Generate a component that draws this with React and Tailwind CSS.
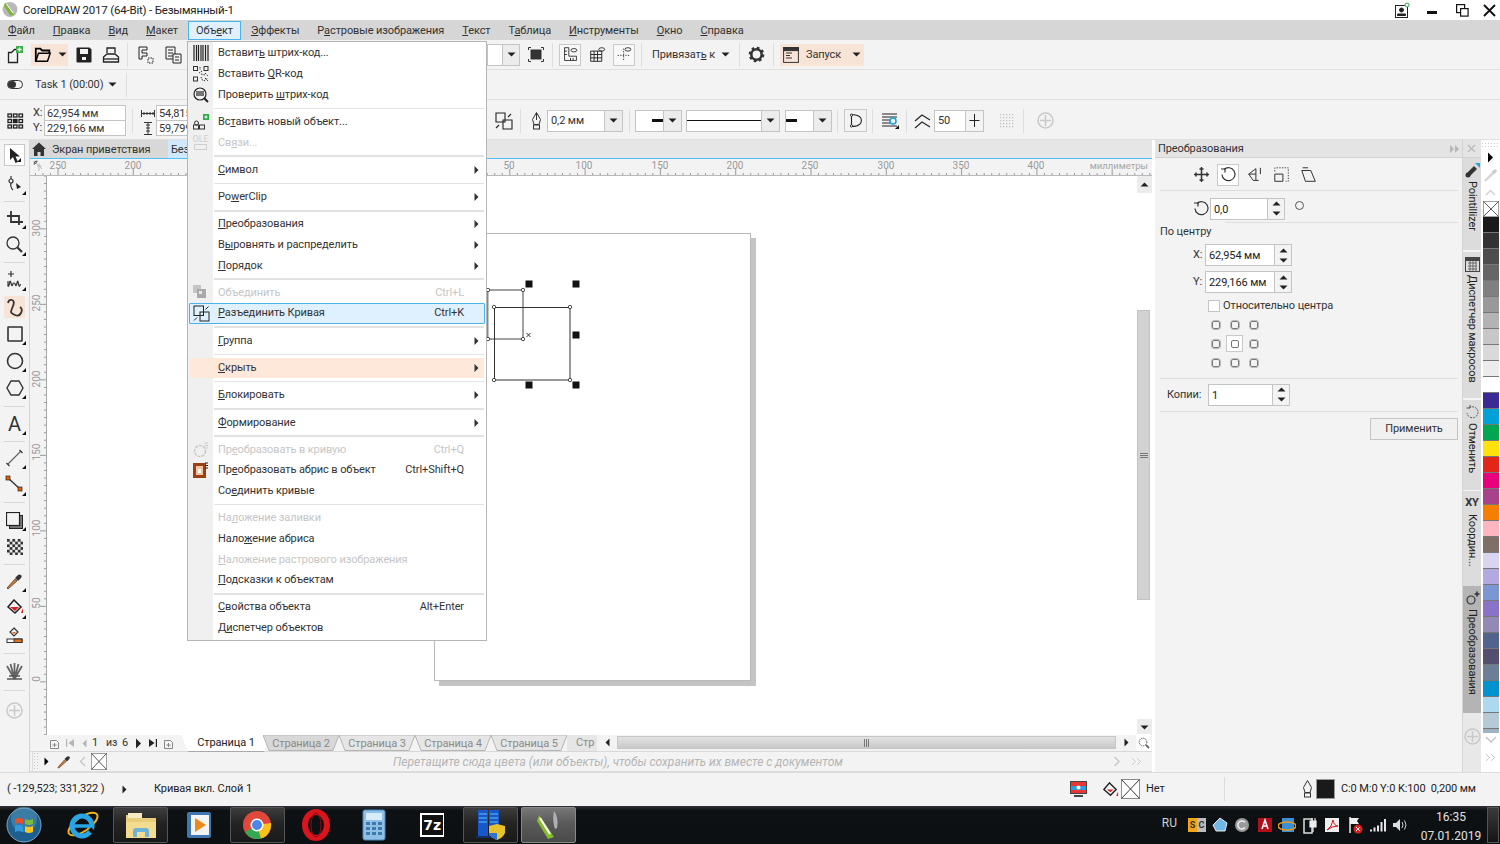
import React from "react";

// small svg wrapper, all toolbar glyphs are drawn on a 20x20 grid
const Ic = ({ s = 20, v = 20, c = "", children }) => (
  <svg width={s} height={s} viewBox={`0 0 ${v} ${v}`} fill="none" stroke="currentColor" strokeWidth="1.3" className={c}>
    {children}
  </svg>
);

const Caret = ({ dir = "down", c = "text-[#222]" }) => (
  <svg width="9" height="9" viewBox="0 0 9 9" className={c} fill="currentColor">
    {dir === "down" && <polygon points="0.5,2.5 8.5,2.5 4.5,6.5" />}
    {dir === "up" && <polygon points="0.5,6.5 8.5,6.5 4.5,2.5" />}
    {dir === "right" && <polygon points="2.5,0.5 6.5,4.5 2.5,8.5" />}
    {dir === "left" && <polygon points="6.5,0.5 2.5,4.5 6.5,8.5" />}
  </svg>
);

const Mn = ({ t }) => {
  const [a, b] = t.split("&");
  if (b === undefined) return t;
  return (
    <>
      {a}
      <span className="underline">{b[0]}</span>
      {b.slice(1)}
    </>
  );
};

const VSep = ({ c = "" }) => <div className={`w-px h-[24px] bg-[#dedede] shrink-0 ${c}`} />;

const Cell = ({ c = "", size = "h-[22px] w-[20px]", children }) => (
  <div className={`shrink-0 flex items-center justify-center text-[#222] ${size} ${c}`}>{children}</div>
);

const XBox = ({ c = "" }) => (
  <svg viewBox="0 0 16 16" preserveAspectRatio="none" className={c} stroke="#333" strokeWidth="0.8">
    <rect x="0.4" y="0.4" width="15.2" height="15.2" fill="#fff" stroke="#8a8a8a" />
    <path d="M0.5 0.5 15.5 15.5M15.5 0.5 0.5 15.5" />
  </svg>
);

const menuItems = ["&Файл", "&Правка", "&Вид", "&Макет", "Объ&ект", "&Эффекты", "Р&астровые изображения", "&Текст", "Т&аблица", "&Инструменты", "&Окно", "&Справка"];

function TitleBar() {
  return (
    <div className="h-[20px] bg-white flex items-center">
      <svg width="18" height="18" viewBox="0 0 18 18" className="ml-[1px]">
        <circle cx="9" cy="8.5" r="7.5" fill="#b9b9b9" />
        <path d="M4 1.5 13 13.5 9.5 15 3 5Z" fill="#7cb733" />
        <path d="M5.5 3 12 12" stroke="#fff" strokeWidth="1" />
      </svg>
      <span className="ml-[4px] text-[11.5px] tracking-[-0.2px] text-[#222]">CorelDRAW 2017 (64-Bit) - Безымянный-1</span>
      <div className="ml-auto flex items-center text-[#222]">
        <svg width="16" height="16" viewBox="0 0 16 16" fill="none" stroke="#222" className="mr-[17px]">
          <rect x="1.5" y="3.5" width="12" height="12" />
          <circle cx="7.5" cy="8" r="2" fill="#222" />
          <path d="M3.5 13.5h8v-1.5h-8Z" fill="#222" />
          <circle cx="13" cy="3" r="2" stroke="#35a853" fill="#fff" />
        </svg>
        <div className="w-[10px] h-[2.5px] bg-[#111] mt-[5px] mr-[19px]" />
        <svg width="13" height="13" viewBox="0 0 13 13" fill="none" stroke="#111" strokeWidth="1.2" className="mr-[14px]">
          <rect x="0.6" y="0.6" width="8" height="8" />
          <rect x="4.6" y="4.6" width="7.5" height="7.5" fill="#fff" />
        </svg>
        <svg width="13" height="13" viewBox="0 0 13 13" stroke="#111" strokeWidth="1.9" className="mr-[4px]">
          <path d="M1 1 12 12M12 1 1 12" />
        </svg>
      </div>
    </div>
  );
}

function MenuBar() {
  return (
    <div className="h-[20px] bg-[#d6d6d6] flex items-center pl-[8px] gap-[18px] text-[#333]">
      {menuItems.map((m) =>
        m === "Объ&ект" ? (
          <div key={m} className="h-[19px] mt-[1px] px-[7px] -mx-[8px] flex items-center bg-[#e0f0fe] border border-[#4ab5ea]">
            <Mn t={m} />
          </div>
        ) : (
          <span key={m} className="mt-[1px]">
            <Mn t={m} />
          </span>
        )
      )}
    </div>
  );
}

function Toolbar1() {
  return (
    <div className="h-[30px] bg-[#f3f3f3] border-b border-[#e0e0e0] flex items-center">
      <Cell c="ml-[5px]">
        <Ic>
          <path d="M3.5 7.5h3l3-3h3v13h-9Z" />
          <rect x="11" y="1" width="7" height="7" fill="#3dae49" stroke="none" />
          <path d="M14.5 2.5v4M12.5 4.5h4" stroke="#fff" />
        </Ic>
      </Cell>
      <div className="ml-[6px] w-[37px] h-[22px] bg-[#f8e3d7] flex items-center pl-[3px] gap-[6px]">
        <Ic s={18}>
          <path d="M2 17V3h5l2 2h8v3" strokeWidth="2" />
          <path d="M2 17l3-9h13l-3 9Z" strokeWidth="1.6" />
        </Ic>
        <Caret />
      </div>
      <Cell c="ml-[6px]">
        <svg width="16" height="16" viewBox="0 0 16 16">
          <path d="M0.5 1.5q0-1 1-1h12l2 2v12q0 1-1 1h-13q-1 0-1-1Z" fill="#222" />
          <rect x="4" y="2" width="8" height="5" fill="#f3f3f3" />
          <rect x="6" y="10" width="4" height="3" fill="#f3f3f3" />
        </svg>
      </Cell>
      <Cell c="ml-[7px]">
        <Ic>
          <path d="M6 8V3h8v5M2.5 17v-5l3.5-3h8l3.5 3v5Z" />
          <path d="M2.5 14h15" />
        </Ic>
      </Cell>
      <VSep c="ml-[6px]" />
      <Cell c="ml-[8px]">
        <Ic>
          <path d="M3 2h8v3H6v3h5v3H6v3H3Z" strokeWidth="1" />
          <path d="M12 13h5v5h-5Z" strokeDasharray="1.5 1" strokeWidth="1" />
        </Ic>
      </Cell>
      <Cell c="ml-[7px]">
        <Ic>
          <path d="M3 2h9v12H3Z" strokeWidth="1" />
          <path d="M5 5h5M5 8h5M5 11h5" strokeWidth="1" />
          <path d="M10 9h8v9h-8Z" fill="#f3f3f3" strokeWidth="1" />
          <path d="M12 12h4M12 15h4" strokeWidth="1" />
        </Ic>
      </Cell>
      <div className="ml-[304px] h-[22px] w-[33px] border border-[#c4c4c4] bg-white flex justify-end">
        <div className="w-[17px] bg-[#ececec] border-l border-[#c4c4c4] flex items-center justify-center">
          <Caret />
        </div>
      </div>
      <Cell c="ml-[6px]">
        <svg width="16" height="15" viewBox="0 0 16 15" fill="none" stroke="#333">
          <rect x="3" y="3" width="10" height="9" fill="#333" />
          <path d="M0.5 3V0.5H3M13 0.5h2.5V3M15.5 12v2.5H13M3 14.5H0.5V12" />
        </svg>
      </Cell>
      <VSep c="ml-[6px]" />
      <Cell size="h-[22px] w-[22px]" c="ml-[6px] border border-[#c9c9c9] bg-[#f8f8f8]">
        <Ic s={17}>
          <path d="M3 2v15h14v-5H8V2Z" strokeWidth="1" />
          <path d="M10 14v3M13 14v3M3 6h3M3 10h3" strokeWidth="1" />
          <ellipse cx="14" cy="5" rx="3.5" ry="2" strokeWidth="1" />
        </Ic>
      </Cell>
      <Cell size="h-[22px] w-[22px]" c="ml-[5px]">
        <Ic s={17}>
          <path d="M2 6h13v12H2ZM2 10h13M2 14h13M6 6v12M10 6v12" strokeWidth="1.1" />
          <ellipse cx="15" cy="4" rx="3.5" ry="2" strokeWidth="1" />
        </Ic>
      </Cell>
      <Cell size="h-[22px] w-[22px]" c="ml-[5px] border border-[#c9c9c9] bg-[#f8f8f8]">
        <Ic s={17}>
          <path d="M9 3v14M2 11h14" strokeWidth="1" strokeDasharray="1.5 1.5" />
          <ellipse cx="14" cy="4" rx="3.5" ry="2" strokeWidth="1" />
        </Ic>
      </Cell>
      <VSep c="ml-[6px]" />
      <span className="ml-[10px] mt-[1px] w-[51px] whitespace-nowrap text-[#333]">
        <Mn t="Привязат&ь к" />
      </span>
      <div className="ml-[18px]">
        <Caret />
      </div>
      <VSep c="ml-[9px]" />
      <Cell c="ml-[6px]">
        <svg width="17" height="17" viewBox="0 0 17 17" fill="none">
          <circle cx="8.5" cy="8.5" r="5.2" stroke="#333" strokeWidth="2.6" />
          <circle cx="8.5" cy="8.5" r="6.6" stroke="#333" strokeWidth="2.5" strokeDasharray="2.6 2.6" />
        </svg>
      </Cell>
      <VSep c="ml-[7px]" />
      <div className="ml-[6px] w-[84px] h-[22px] bg-[#f8e3d7] flex items-center pl-[3px] text-[#333]">
        <svg width="16" height="16" viewBox="0 0 16 16" fill="none" stroke="#333">
          <rect x="0.6" y="0.6" width="14.8" height="14.8" />
          <rect x="0.6" y="0.6" width="14.8" height="3" fill="#333" />
          <path d="M3 6h6M3 8.5h4M3 11h6" />
        </svg>
        <span className="ml-[7px] mt-[1px] w-[36px]">Запуск</span>
        <div className="ml-[10px]">
          <Caret />
        </div>
      </div>
    </div>
  );
}

function Toolbar2() {
  return (
    <div className="h-[30px] bg-[#f3f3f3] border-b border-[#e0e0e0] flex items-center">
      <div className="ml-[7px] w-[16px] h-[9px] rounded-full border-[1.5px] border-[#333] flex">
        <div className="w-[8px] h-full rounded-full bg-[#333]" />
      </div>
      <span className="ml-[12px] mt-[1px] w-[65px] whitespace-nowrap text-[#333]">Task 1 (00:00)</span>
      <div className="ml-[8px]">
        <Caret />
      </div>
      <VSep c="ml-[9px]" />
    </div>
  );
}

const Combo = ({ c = "", btn = true, children }) => (
  <div className={`h-[22px] border border-[#c4c4c4] bg-white flex items-center shrink-0 ${c}`}>
    <div className="flex-1 min-w-0 flex items-center h-full">{children}</div>
    {btn && (
      <div className="w-[18px] h-full bg-[#ececec] border-l border-[#c4c4c4] flex items-center justify-center">
        <Caret />
      </div>
    )}
  </div>
);

function PropBar() {
  return (
    <div className="h-[40px] bg-[#f3f3f3] border-b border-[#e0e0e0] flex items-center pt-[2px]">
      <Cell c="ml-[5px]">
        <svg width="17" height="16" viewBox="0 0 17 16" fill="none" stroke="#222">
          {[1, 6.5, 12].map((y) =>
            [1, 6.5, 12].map((x) => <rect key={`${x}${y}`} x={x} y={y} width="3.5" height="3" fill={x === 6.5 && y === 6.5 ? "#222" : "#f3f3f3"} strokeWidth="1.3" />)
          )}
        </svg>
      </Cell>
      <div className="ml-[8px] flex flex-col text-[#333]">
        <div className="flex items-center h-[15px]">
          <span className="w-[11px]">X:</span>
          <div className="w-[82px] h-[16px] border border-[#c4c4c4] bg-white pl-[2px] leading-[15px]">62,954 мм</div>
        </div>
        <div className="flex items-center h-[15px]">
          <span className="w-[11px]">Y:</span>
          <div className="w-[82px] h-[16px] border border-[#c4c4c4] bg-white pl-[2px] leading-[15px]">229,166 мм</div>
        </div>
      </div>
      <VSep c="ml-[6px]" />
      <div className="ml-[8px] flex flex-col text-[#333]">
        <div className="flex items-center h-[15px]">
          <svg width="14" height="9" viewBox="0 0 14 9" stroke="#333" className="mr-[1px]">
            <path d="M0.5 1v7M13.5 1v7M0.5 4.5h13M3 3v3M6 3v3M9 3v3M12 3v3" />
          </svg>
          <div className="w-[40px] h-[16px] border border-[#c4c4c4] bg-white pl-[2px] leading-[15px]">54,815</div>
        </div>
        <div className="flex items-center h-[15px]">
          <svg width="14" height="13" viewBox="0 0 14 13" stroke="#333" className="mr-[1px]">
            <path d="M3 0.5h8M3 12.5h8M7 0.5v12M5 3h4M5 6h4M5 9h4" />
          </svg>
          <div className="w-[40px] h-[16px] border border-[#c4c4c4] bg-white pl-[2px] leading-[15px]">59,799</div>
        </div>
      </div>
      <Cell c="ml-[298px]">
        <Ic>
          <path d="M2 2h9v9H2ZM9 9h9v9H9Z" fill="none" strokeWidth="1.1" />
          <path d="M14 6l3-3M2 17l3-3" strokeWidth="1.1" />
        </Ic>
      </Cell>
      <VSep c="ml-[6px]" />
      <Cell c="ml-[5px]">
        <svg width="11" height="18" viewBox="0 0 11 18" fill="none" stroke="#333">
          <path d="M5.5 0.5 9.5 7.5 8 12.5H3L1.5 7.5Z" />
          <path d="M5.5 1v7" />
          <rect x="2.5" y="13" width="6" height="4" />
        </svg>
      </Cell>
      <Combo c="ml-[1px] w-[76px]">
        <span className="pl-[3px] text-[#333]">0,2 мм</span>
      </Combo>
      <VSep c="ml-[6px]" />
      <Combo c="ml-[5px] w-[47px]">
        <div className="ml-auto w-[11px] h-[2.5px] bg-[#111]" />
      </Combo>
      <Combo c="ml-[4px] w-[94px]">
        <div className="w-full h-[1px] bg-[#111]" />
      </Combo>
      <Combo c="ml-[5px] w-[47px]">
        <div className="w-[11px] h-[2.5px] bg-[#111]" />
      </Combo>
      <VSep c="ml-[5px]" />
      <Cell size="h-[23px] w-[23px]" c="ml-[6px] border border-[#c9c9c9]">
        <Ic s={18}>
          <path d="M5 3h3q8 1 8 6.5T8 16H5ZM5 3v13" strokeWidth="1.2" />
          <circle cx="5" cy="3.5" r="1.3" fill="#f3f3f3" strokeWidth="1" />
          <circle cx="5" cy="15.5" r="1.3" fill="#f3f3f3" strokeWidth="1" />
        </Ic>
      </Cell>
      <VSep c="ml-[5px]" />
      <Cell c="ml-[7px]">
        <Ic>
          <path d="M2 3h15M2 6h15M2 9h10M2 12h10M2 15h15" strokeWidth="1" />
          <circle cx="13" cy="10" r="3" stroke="#1c9fe0" strokeWidth="1.6" fill="#f3f3f3" />
          <polygon points="19,14 19,18 15,18" fill="#111" stroke="none" />
        </Ic>
      </Cell>
      <VSep c="ml-[6px]" />
      <Cell c="ml-[6px]">
        <Ic>
          <path d="M2 10 9 4l8 5M2 17l7-6 8 5" strokeWidth="1.1" />
        </Ic>
      </Cell>
      <div className="ml-[1px] h-[22px] w-[50px] border border-[#c4c4c4] bg-white flex items-center shrink-0">
        <span className="pl-[3px] w-[30px] text-[#333]">50</span>
        <div className="flex-1 h-full bg-[#f3f3f3] border-l border-[#c4c4c4] flex items-center justify-center">
          <svg width="11" height="15" viewBox="0 0 11 15" stroke="#222">
            <path d="M5.5 1v13M0.5 7.5h10" />
          </svg>
        </div>
      </div>
      <Cell c="ml-[12px]">
        <svg width="15" height="15" viewBox="0 0 15 15" fill="#c2c2c2">
          {[1, 4, 7, 10, 13].map((y) => [1, 4, 7, 10, 13].map((x) => <rect key={`${x}${y}`} x={x} y={y} width="1.3" height="1.3" />))}
        </svg>
      </Cell>
      <VSep c="ml-[7px]" />
      <Cell c="ml-[11px]">
        <PlusCircle />
      </Cell>
    </div>
  );
}

function PlusCircle() {
  return (
    <svg width="17" height="17" viewBox="0 0 17 17" fill="none" stroke="#c9c9c9" strokeWidth="1.5">
      <circle cx="8.5" cy="8.5" r="7.5" />
      <path d="M8.5 3v11M3 8.5h11" />
    </svg>
  );
}

const Corner = () => <div className="absolute right-[3px] bottom-[3px] w-0 h-0 border-l-[4px] border-l-transparent border-b-[4px] border-b-[#111]" />;

const Tool = ({ c = "", h = "h-[27px]", corner = true, children }) => (
  <div className={`relative shrink-0 flex items-center justify-center text-[#333] ${h} ${c}`}>
    {children}
    {corner && <Corner />}
  </div>
);

const HSepT = ({ c = "" }) => (
  <div className={`flex items-center justify-center shrink-0 ${c}`}>
    <div className="w-[21px] h-px bg-[#d8d8d8]" />
  </div>
);

function Toolbox() {
  return (
    <div className="w-[30px] shrink-0 bg-[#f3f3f3] border-r border-[#d4d4d4] flex flex-col pt-[4px]">
      <Tool h="h-[22px]" c="mx-[4px] bg-white border border-[#c9c9c9]">
        <svg width="13" height="17" viewBox="0 0 13 17" fill="#222">
          <path d="M2 1v12l3-3 2.5 6 2.5-1-2.5-5.5H12Z" />
        </svg>
      </Tool>
      <Tool c="mt-[4.5px]">
        <Ic>
          <circle cx="6" cy="7" r="2" strokeWidth="1.2" />
          <path d="M6 2v3M6 9q-1 4 2 7" strokeWidth="1.2" />
          <polygon points="11,9 16,13 12,15" fill="#222" stroke="none" />
        </Ic>
      </Tool>
      <HSepT c="h-[7px]" />
      <Tool>
        <Ic>
          <path d="M2 8h12v9M6 3v11h12" strokeWidth="1.8" />
        </Ic>
      </Tool>
      <Tool>
        <Ic>
          <circle cx="8" cy="8" r="6" strokeWidth="1.3" />
          <path d="M12.5 12.5 17 17" strokeWidth="2.2" />
        </Ic>
      </Tool>
      <HSepT c="h-[8px]" />
      <Tool>
        <Ic>
          <path d="M6 1v6M3 4h6" strokeWidth="1.2" />
          <path d="M3 11v5q1 1 1.5-3t1.5 0 1.5 2 1.5-2 1.5 2 1.5-2 1.5 1 2 0" strokeWidth="1.2" />
        </Ic>
      </Tool>
      <Tool h="h-[22px]" c="my-[2.5px] mx-[4px] bg-[#f8e3d7]" corner={false}>
        <Ic>
          <path d="M3 6q1-4 4-3t1 6-2 6 4 3 6-2-1-6" strokeWidth="1.8" />
        </Ic>
      </Tool>
      <Tool>
        <Ic>
          <rect x="3" y="3" width="14" height="14" rx="0.5" strokeWidth="1.6" />
        </Ic>
      </Tool>
      <Tool>
        <Ic>
          <circle cx="10" cy="10" r="7.5" strokeWidth="1.6" />
        </Ic>
      </Tool>
      <Tool>
        <Ic>
          <path d="M6 3h8l4 7-4 7H6l-4-7Z" strokeWidth="1.4" />
        </Ic>
      </Tool>
      <HSepT c="h-[9px]" />
      <Tool>
        <span className="text-[20px] leading-none text-[#333]">A</span>
      </Tool>
      <HSepT c="h-[7px]" />
      <Tool>
        <Ic>
          <path d="M3 16 16 3" strokeWidth="1.2" stroke="#666" />
          <path d="M1.5 15l3 3M14.5 2l3 3" strokeWidth="1.2" />
        </Ic>
      </Tool>
      <Tool>
        <Ic>
          <path d="M3 3l12 11" strokeWidth="1.4" />
          <rect x="1" y="1" width="4" height="4" fill="#e85f00" stroke="#222" strokeWidth="0.7" />
          <rect x="13" y="12" width="4" height="4" fill="#e85f00" stroke="#222" strokeWidth="0.7" />
        </Ic>
      </Tool>
      <HSepT c="h-[8px]" />
      <Tool>
        <svg width="17" height="17" viewBox="0 0 17 17" fill="none" stroke="#222">
          <rect x="3.5" y="3.5" width="13" height="13" fill="#777" />
          <rect x="0.5" y="0.5" width="13" height="13" fill="#f3f3f3" strokeWidth="1.2" />
        </svg>
      </Tool>
      <Tool corner={false}>
        <svg width="16" height="16" viewBox="0 0 16 16">
          <rect width="16" height="16" fill="#333" />
          {[0, 1, 2, 3, 4, 5].map((y) =>
            [0, 1, 2, 3, 4, 5].map((x) => ((x + y) % 2 ? <rect key={`${x}${y}`} x={x * 2.7} y={y * 2.7} width="2.7" height="2.7" fill="#eee" /> : null))
          )}
        </svg>
      </Tool>
      <HSepT c="h-[7px]" />
      <Tool>
        <svg width="17" height="17" viewBox="0 0 17 17">
          <path d="M1 15l1 1 9-8-2-2Z" fill="#d97a2b" stroke="#333" strokeWidth="0.7" />
          <path d="M9 5l3 3 3-3q1.5-2 0-3t-3 0Z" fill="#333" />
        </svg>
      </Tool>
      <Tool>
        <svg width="18" height="18" viewBox="0 0 18 18" fill="none" stroke="#222" strokeWidth="1.5">
          <path d="M8 1 15 8 9 14 2 8Z" />
          <path d="M4 8h9L9 12Z" fill="#e01f1f" stroke="none" />
          <path d="M17 9l-2 5h2Z" fill="#e01f1f" stroke="none" />
        </svg>
      </Tool>
      <Tool corner={false}>
        <svg width="17" height="17" viewBox="0 0 17 17" fill="none" stroke="#333">
          <path d="M8 1l4 4-4 4-4-4Z" strokeWidth="1.2" />
          <path d="M6 5h4L8 7Z" fill="#e85f00" stroke="none" />
          <rect x="1" y="12" width="15" height="3.5" fill="#fff" />
          <rect x="8" y="12" width="8" height="3.5" fill="#e2711d" />
        </svg>
      </Tool>
      <HSepT c="h-[9px]" />
      <Tool corner={false}>
        <svg width="17" height="17" viewBox="0 0 17 17" fill="none">
          <path d="M8.5 16 1 3M8.5 16 4.5 1M8.5 16V0M8.5 16 12.5 1M8.5 16 16 3" stroke="#666" strokeWidth="1.8" />
          <path d="M1 16h15M3 13h11" stroke="#555" strokeWidth="1.5" />
        </svg>
      </Tool>
      <HSepT c="h-[12px]" />
      <Tool corner={false}>
        <PlusCircle />
      </Tool>
    </div>
  );
}

const hLabels = [
  [58, "250"],
  [133, "200"],
  [509, "50"],
  [584, "100"],
  [660, "150"],
  [735, "200"],
  [810, "250"],
  [886, "300"],
  [961, "350"],
  [1036, "400"],
];
const vLabels = [
  [228, "300"],
  [303, "250"],
  [379, "200"],
  [452, "150"],
  [528, "100"],
  [603, "50"],
  [679, "0"],
];

function HRuler() {
  const minor = Array.from({ length: 158 }, (_, i) => i * 7.53 - 47.3);
  return (
    <div className="relative h-[17px] bg-[#f3f3f3] border-b border-[#b9b9b9] overflow-hidden">
      <svg width="1122" height="17" className="absolute left-0 top-0" stroke="#9a9a9a">
        {minor.map((x, i) => (
          <path key={i} d={i % 10 === 0 ? `M${x} 10v6` : `M${x} 14v2`} />
        ))}
        <path d="M4 2l8 8M4 6V2h4M7 7H12M9 4v8" stroke="#bdbdbd" />
      </svg>
      {hLabels.map(([x, t]) => (
        <span key={x} className="absolute top-[-1px] text-[10px] tracking-normal text-[#9a9a9a] -translate-x-1/2" style={{ left: x - 30 }}>
          {t}
        </span>
      ))}
      <span className="absolute right-[4px] top-[-1px] text-[9.5px] tracking-normal text-[#a5a5a5]">миллиметры</span>
    </div>
  );
}

function VRuler() {
  const ticks = Array.from({ length: 76 }, (_, i) => i * 7.55);
  return (
    <div className="relative w-[16px] shrink-0 bg-[#f3f3f3] overflow-hidden">
      <svg width="16" height="559" className="absolute left-0 top-0" stroke="#9a9a9a">
        {ticks.map((y, i) => (
          <path key={i} d={i % 10 === 7 ? `M10 ${y}h6` : `M14 ${y}h2`} />
        ))}
      </svg>
      {vLabels.map(([y, t]) => (
        <span
          key={y}
          className="absolute left-[2px] text-[10px] tracking-normal leading-[10px] text-[#9a9a9a] [writing-mode:vertical-rl] rotate-180 -translate-y-1/2"
          style={{ top: y - 176 }}
        >
          {t}
        </span>
      ))}
    </div>
  );
}

function Selection() {
  const nodes = [
    [523, 290],
    [523, 339],
    [488, 290],
    [488, 339],
    [494, 307],
    [570, 307],
    [494, 380],
    [570, 380],
  ];
  const handles = [
    [529, 284],
    [576, 284],
    [576, 335],
    [529, 385],
    [576, 385],
  ];
  return (
    <svg width="110" height="120" viewBox="480 275 110 120" className="absolute left-[433px] top-[99px]" fill="none">
      <path d="M488 290h35v49h-35" stroke="#444" />
      <path d="M487.5 290v49" stroke="#888" strokeWidth="2" />
      <rect x="494.5" y="307.5" width="75.5" height="72.5" stroke="#333" />
      <path d="M526.5 333l4 4m0-4l-4 4" stroke="#333" />
      {nodes.map(([x, y]) => (
        <circle key={`${x}${y}`} cx={x} cy={y} r="1.7" fill="#fff" stroke="#222" strokeWidth="0.8" />
      ))}
      {handles.map(([x, y]) => (
        <rect key={`${x}${y}`} x={x - 3.5} y={y - 3.5} width="7" height="7" fill="#111" />
      ))}
    </svg>
  );
}

function VScroll() {
  return (
    <div className="w-[15px] shrink-0 bg-white flex flex-col items-start">
      <div className="h-[17px] w-full bg-[#ececec] flex items-center justify-center shrink-0">
        <Caret dir="up" />
      </div>
      <div className="mt-[117px] w-[13px] h-[290px] bg-[#d2d2d2] border border-[#c3c3c3] flex items-center justify-center shrink-0">
        <svg width="8" height="7" stroke="#777">
          <path d="M0 1.5h8M0 3.5h8M0 5.5h8" />
        </svg>
      </div>
      <div className="flex-1" />
      <div className="h-[16px] w-full bg-[#ececec] flex items-center justify-center shrink-0">
        <Caret />
      </div>
    </div>
  );
}

const pages = ["Страница 2", "Страница 3", "Страница 4", "Страница 5"];

// one inactive page tab, the slanted outline is a small svg behind the label
const PageTab = ({ label, first }) => (
  <div className={`relative w-[76px] h-[16px] flex items-center justify-center text-[#8a8a8a] shrink-0 ${first ? "-ml-[8px]" : ""}`}>
    <svg width="76" height="16" viewBox="0 0 76 16" className="absolute left-0 top-0">
      <path d="M0 0 6 15.5H70L76 0Z" fill={first ? "#d8d8d8" : "#e6e6e6"} stroke="#b5b5b5" />
    </svg>
    <span className="relative mt-[1px]">{label}</span>
  </div>
);

function PageTabs() {
  return (
    <div className="h-[17px] bg-[#f3f3f3] border-b border-[#d8d8d8] flex items-end pl-[16px]">
      <div className="w-[141px] h-[17px] border-t border-[#b9b9b9] flex items-center text-[#333] shrink-0">
        <svg width="11" height="11" viewBox="0 0 11 11" fill="none" stroke="#888" className="ml-[3px]">
          <path d="M1.5 2.5h6l2 2v6h-8ZM5.5 5v4M3.5 7h4" />
        </svg>
        <svg width="10" height="10" viewBox="0 0 10 10" fill="#b5b5b5" className="ml-[5px]">
          <path d="M1 1h1.2v8H1ZM9 1v8L3.5 5Z" />
        </svg>
        <Caret dir="left" c="ml-[5px] text-[#b5b5b5]" />
        <span className="ml-[3px] w-[7px]">1</span>
        <span className="ml-[7px] w-[11px] text-[10.5px]">из</span>
        <span className="ml-[5px] w-[7px]">6</span>
        <Caret dir="right" c="ml-[5px] text-[#222] scale-125" />
        <svg width="10" height="10" viewBox="0 0 10 10" fill="#222" className="ml-[5px]">
          <path d="M9 1H7.8v8H9ZM1 1v8L6.5 5Z" />
        </svg>
        <svg width="11" height="11" viewBox="0 0 11 11" fill="none" stroke="#888" className="ml-[5px]">
          <path d="M1.5 2.5h6l2 2v6h-8ZM5.5 5v4M3.5 7h4" />
        </svg>
      </div>
      <div className="w-[90px] h-[18px] -mb-px bg-white border-b border-[#a9a9a9] flex items-center justify-center text-[#222] shrink-0 -ml-[6px] [clip-path:polygon(0_0,100%_0,92%_100%,8%_100%)]">
        Страница 1
      </div>
      {pages.map((p, i) => (
        <PageTab key={p} label={p} first={i === 0} />
      ))}
      <div className="w-[30px] h-[16px] bg-[#e6e6e6] flex items-center pl-[9px] text-[#8a8a8a] shrink-0 overflow-hidden">Стр</div>
      <div className="w-[20px] h-[17px] bg-[#f3f3f3] flex items-center justify-center shrink-0">
        <Caret dir="left" />
      </div>
      <div className="w-[499px] h-[13px] mb-[2px] shrink-0 bg-[linear-gradient(#e2e2e2,#c9c9c9)] border border-[#c6c6c6] flex items-center justify-center">
        <svg width="7" height="8" stroke="#777">
          <path d="M1.5 0v8M3.5 0v8M5.5 0v8" />
        </svg>
      </div>
      <div className="w-[20px] h-[17px] flex items-center justify-center shrink-0">
        <Caret dir="right" />
      </div>
      <div className="w-[15px] h-[17px] bg-white flex items-center justify-center shrink-0">
        <svg width="12" height="12" viewBox="0 0 12 12" fill="none" stroke="#666">
          <circle cx="5" cy="5" r="3.8" strokeDasharray="1.5 0.7" />
          <path d="M8 8l3 3" strokeWidth="1.8" />
        </svg>
      </div>
    </div>
  );
}

function DocColors() {
  return (
    <div className="h-[20px] bg-[#f3f3f3] border-b border-[#dcdcdc] flex items-center">
      <div className="w-[8px] h-full ml-[2px] border-l border-[#dcdcdc] bg-[radial-gradient(#c9c9c9_0.6px,transparent_0.8px)] bg-[length:3px_3px]" />
      <Caret dir="right" c="ml-[2px]" />
      <svg width="14" height="14" viewBox="0 0 17 17" className="ml-[6px]">
        <path d="M1 15l1 1 9-8-2-2Z" fill="#d97a2b" stroke="#333" strokeWidth="0.7" />
        <path d="M9 5l3 3 3-3q1.5-2 0-3t-3 0Z" fill="#333" />
      </svg>
      <svg width="7" height="11" viewBox="0 0 7 11" fill="none" stroke="#c9c9c9" strokeWidth="1.5" className="ml-[8px]">
        <path d="M6 1 1.5 5.5 6 10" />
      </svg>
      <XBox c="ml-[5px] w-[16px] h-[17px]" />
      <span className="ml-[286px] italic text-[12px] tracking-normal text-[#b5b5b5]">Перетащите сюда цвета (или объекты), чтобы сохранить их вместе с документом</span>
      <svg width="8" height="11" viewBox="0 0 8 11" fill="none" stroke="#c9c9c9" strokeWidth="1.5" className="ml-auto mr-[10px]">
        <path d="M1.5 1 6 5.5 1.5 10" />
      </svg>
      <svg width="11" height="9" viewBox="0 0 11 9" fill="none" stroke="#c9c9c9" className="mr-[10px]">
        <path d="M1 1l3.5 3.5L1 8M6 1l3.5 3.5L6 8" />
      </svg>
    </div>
  );
}

function Center() {
  return (
    <div className="w-[1122px] shrink-0 flex flex-col">
      <div className="h-[18px] bg-[#e6e6e6] flex">
        <div className="w-[138px] bg-[#d8d8d8] flex items-center text-[#333]">
          <svg width="14" height="14" viewBox="0 0 14 14" className="ml-[2px]" fill="#333">
            <path d="M7 0.5 14 7h-2v7H8.5v-4h-3v4H2V7H0Z" />
          </svg>
          <span className="ml-[6px] mt-[1px]">Экран приветствия</span>
        </div>
        <div className="w-[40px] bg-[#cfe8fb] flex items-center pl-[3px] pt-[1px] text-[#333]">Без</div>
      </div>
      <div className="h-px bg-[#4fc3f7]" />
      <HRuler />
      <div className="flex-1 min-h-0 flex">
        <VRuler />
        <div className="relative flex-1 bg-white border-l border-[#a9a9a9]">
          <div className="absolute left-[387px] top-[57px] w-[317px] h-[448px] bg-white border border-[#b9b9b9] shadow-[5px_5px_0_#c4c4c4]" />
          <Selection />
        </div>
        <VScroll />
      </div>
      <PageTabs />
      <DocColors />
    </div>
  );
}

const Spin = () => (
  <div className="w-[17px] h-full border-l border-[#c4c4c4] bg-[#f3f3f3] flex flex-col items-center justify-center gap-[1px]">
    <Caret dir="up" />
    <Caret />
  </div>
);

const SpinInput = ({ c = "", value }) => (
  <div className={`h-[22px] bg-white border border-[#c4c4c4] flex shrink-0 ${c}`}>
    <span className="flex-1 pl-[3px] text-[#222] leading-[21px]">{value}</span>
    <Spin />
  </div>
);

const Anchor = ({ active }) => (
  <div className={`w-[17px] h-[17px] flex items-center justify-center ${active ? "bg-white border border-[#c9c9c9]" : ""}`}>
    <div className={`w-[8px] h-[8px] rounded-[2px] border border-[#777] ${active ? "" : "outline outline-1 outline-[#bbb]"}`} />
  </div>
);

function Docker() {
  return (
    <div className="w-[310px] shrink-0 border-l-[3px] border-white flex flex-col bg-[#f3f3f3]">
      <div className="h-[18px] bg-[#e4e4e4] flex items-center pl-[3px] pt-[1px] text-[#333] border-b border-[#d2d2d2]">
        Преобразования
        <svg width="9" height="8" viewBox="0 0 9 8" fill="#b5b5b5" className="ml-auto mr-[3px]">
          <path d="M0 0l4 4-4 4ZM5 0l4 4-4 4Z" />
        </svg>
      </div>
      <div className="flex-1 flex flex-col pl-[5px] pr-[4px] text-[#333]">
        <div className="h-[33px] border-b border-[#dedede] flex items-center gap-[5px] pl-[30px] pt-[1px]">
          <div className="w-[22px] h-[22px] flex items-center justify-center">
            <svg width="17" height="17" viewBox="0 0 17 17" stroke="#333" strokeWidth="1.5">
              <path d="M8.5 1v15M1 8.5h15" />
              <path d="M6.5 3h4M6.5 14h4M3 6.5v4M14 6.5v4" />
            </svg>
          </div>
          <div className="w-[22px] h-[22px] bg-white border border-[#c9c9c9] flex items-center justify-center">
            <Rotate />
          </div>
          <div className="w-[22px] h-[22px] flex items-center justify-center">
            <Ic s={18}>
              <path d="M11 3 3 9l5 7h6M3 9h8M11 3v13" strokeWidth="1.1" />
              <path d="M16 2v7" strokeWidth="1.1" />
            </Ic>
          </div>
          <div className="w-[22px] h-[22px] flex items-center justify-center">
            <Ic s={18}>
              <path d="M2 9h9v8H2Z" strokeWidth="1.1" />
              <path d="M2 6V2h15v15h-3" strokeWidth="1" strokeDasharray="1.5 1.5" />
            </Ic>
          </div>
          <div className="w-[22px] h-[22px] flex items-center justify-center">
            <Ic s={18}>
              <path d="M2 5h10l5 12H6ZM3 2h6" strokeWidth="1.1" />
            </Ic>
          </div>
        </div>
        <div className="h-[29px] flex items-center mt-[3px] pl-[33px]">
          <Rotate />
          <SpinInput c="w-[75px]" value="0,0" />
          <div className="ml-[10px] mb-[6px] w-[9px] h-[9px] rounded-full border-[1.5px] border-[#555]" />
        </div>
        <div className="flex items-center h-[20px] -mt-[5px]">
          <span className="mt-[8px] shrink-0">По центру</span>
          <div className="flex-1 h-px bg-[#dedede] ml-[14px] mb-[12px]" />
        </div>
        <div className="flex items-center mt-[6px] ml-[33px]">
          <span className="w-[11px]">X:</span>
          <SpinInput c="w-[87px] ml-[1px]" value="62,954 мм" />
        </div>
        <div className="flex items-center mt-[5px] ml-[33px]">
          <span className="w-[11px]">Y:</span>
          <SpinInput c="w-[87px] ml-[1px]" value="229,166 мм" />
        </div>
        <div className="flex items-center mt-[5px] ml-[48px]">
          <div className="w-[12px] h-[12px] bg-white border border-[#c4c4c4]" />
          <span className="ml-[3px]">Относительно центра</span>
        </div>
        <div className="grid grid-cols-3 w-[56px] h-[56px] ml-[47px] mt-[2px] place-items-center">
          {[0, 1, 2, 3, 4, 5, 6, 7, 8].map((i) => (
            <Anchor key={i} active={i === 4} />
          ))}
        </div>
        <div className="h-px bg-[#dedede] mt-[6px]" />
        <div className="flex items-center mt-[4.5px] ml-[7px]">
          <span className="w-[41px]">Копии:</span>
          <SpinInput c="w-[82px]" value="1" />
        </div>
        <div className="h-px bg-[#dedede] mt-[5.5px]" />
        <div className="self-end mt-[6px] w-[88px] h-[22px] bg-[#f0f0f0] border border-[#c4c4c4] flex items-center justify-center">Применить</div>
      </div>
    </div>
  );
}

function Rotate() {
  return (
    <svg width="17" height="17" viewBox="0 0 17 17" fill="none" stroke="#333" strokeWidth="1.2">
      <path d="M4 3.5a6.5 6.5 0 1 1-2 5" />
      <path d="M1 3h4v3.5" />
    </svg>
  );
}

const VTab = ({ c = "", h, text, icon }) => (
  <div className={`shrink-0 flex flex-col items-center text-[#222] overflow-hidden ${h} ${c}`}>
    <div className="mt-[3px] h-[18px] flex items-center justify-center shrink-0">{icon}</div>
    <span className="mt-[2px] [writing-mode:vertical-rl] whitespace-nowrap">{text}</span>
  </div>
);

function SideTabs() {
  return (
    <div className="w-[19px] shrink-0 bg-[#f3f3f3] border-l border-[#d4d4d4] flex flex-col">
      <div className="h-[18px] shrink-0 bg-[#e4e4e4] border-b border-[#d2d2d2] flex items-center pl-[4px]">
        <svg width="9" height="9" viewBox="0 0 9 9" stroke="#bdbdbd" strokeWidth="1.5">
          <path d="M1 1l7 7M8 1 1 8" />
        </svg>
      </div>
      <VTab
        h="h-[92px]"
        c="bg-[#dcdcdc]"
        text="Pointillizer"
        icon={
          <svg width="15" height="15" viewBox="0 0 15 15">
            <path d="M1 11 9 3l3 3-8 8Z" fill="#333" />
            <circle cx="3" cy="12" r="2.5" fill="#333" />
            <path d="M10 0h5v5Z" fill="#2c9fe0" />
          </svg>
        }
      />
      <VTab
        h="h-[146px]"
        c="mt-[2px] bg-[#dcdcdc]"
        text="Диспетчер макросов"
        icon={
          <svg width="15" height="15" viewBox="0 0 15 15" fill="none" stroke="#444">
            <rect x="0.5" y="0.5" width="14" height="14" />
            <rect x="0.5" y="0.5" width="14" height="3" fill="#444" />
            <path d="M3 6h9M3 9h9M3 12h9M5 4v10M8 4v10M11 4v10" strokeWidth="0.7" />
          </svg>
        }
      />
      <VTab
        h="h-[90px]"
        c="mt-[2px] bg-[#dcdcdc]"
        text="Отменить"
        icon={
          <svg width="14" height="14" viewBox="0 0 14 14" fill="none" stroke="#555">
            <path d="M4 3a5.5 5.5 0 1 1-2 5" strokeDasharray="2 1" />
            <path d="M1.5 3h3.5V0" />
          </svg>
        }
      />
      <VTab h="h-[95px]" c="mt-[1px] bg-[#dcdcdc]" text="Координ..." icon={<span className="font-bold text-[#333]">XY</span>} />
      <VTab
        h="h-[127px]"
        c="bg-[#b4b4b4]"
        text="Преобразования"
        icon={
          <svg width="15" height="15" viewBox="0 0 15 15" fill="none" stroke="#333">
            <circle cx="6" cy="9" r="4" strokeWidth="1.2" />
            <path d="M12 0.5v5M9.5 3h5" strokeWidth="1.6" />
          </svg>
        }
      />
      <div className="flex-1 bg-[#e8e8e8] pt-[15px] flex justify-center">
        <PlusCircle />
      </div>
    </div>
  );
}

const swatches = [
  "#1a1a1a", "#333333", "#4d4d4d", "#666666", "#808080", "#999999", "#b3b3b3", "#c7c7c7", "#d9d9d9", "#ececec", "#ffffff",
  "#3b2a96", "#00a0d8", "#00a650", "#ffe10a", "#e2261a", "#e6007e", "#a8438b", "#f57f00", "#ffb6c1", "#7f6f68",
  "#d9d4ef", "#b3a8e0", "#7b96d2", "#8a72c6", "#9389b5", "#52638e", "#544e6f", "#6c7f97", "#0093d0", "#acd9f0", "#b5c9d6", "#9fb2bf",
];

function Palette() {
  return (
    <div className="w-[19px] shrink-0 bg-white flex flex-col items-center">
      <div className="w-full h-[6px] mt-[2px] shrink-0 bg-[radial-gradient(#c9c9c9_0.6px,transparent_0.8px)] bg-[length:3px_3px]" />
      <div className="mt-[4px] h-[10px] shrink-0 flex items-center justify-center">
        <Caret dir="right" c="scale-125" />
      </div>
      <div className="mt-[6px] h-[14px] shrink-0">
        <svg width="14" height="14" viewBox="0 0 17 17">
          <path d="M1 15l1 1 9-8-2-2Z" fill="#ddd" stroke="#bbb" strokeWidth="0.7" />
          <path d="M9 5l3 3 3-3q1.5-2 0-3t-3 0Z" fill="#ccc" />
        </svg>
      </div>
      <svg width="11" height="7" viewBox="0 0 11 7" fill="none" stroke="#d2d2d2" strokeWidth="1.5" className="mt-[6.5px] shrink-0">
        <path d="M1 6l4.5-4.5L10 6" />
      </svg>
      <XBox c="mt-[5.5px] w-[16px] h-[16px] shrink-0" />
      <div className="h-[516px] w-[16px] overflow-hidden shrink-0 bg-[#777]">
        {swatches.map((s) => (
          <div key={s} className="h-[16px] border-b border-[#777]" style={{ background: s }} />
        ))}
      </div>
      <svg width="12" height="7" viewBox="0 0 12 7" fill="none" stroke="#c9c9c9" strokeWidth="1.6" className="mt-[3px] shrink-0">
        <path d="M1 1l5 5 5-5" />
      </svg>
      <svg width="11" height="9" viewBox="0 0 11 9" fill="none" stroke="#c9c9c9" className="mt-[10px] shrink-0">
        <path d="M1 1l3.5 3.5L1 8M6 1l3.5 3.5L6 8" />
      </svg>
    </div>
  );
}

function StatusBar() {
  return (
    <div className="h-[34px] bg-[#f3f3f3] border-t border-[#dcdcdc] flex items-center text-[#222] pb-[1px]">
      <span className="ml-[7px] w-[113px] whitespace-nowrap">( -129,523; 331,322 )</span>
      <Caret dir="right" />
      <span className="ml-[25px]">Кривая вкл. Слой 1</span>
      <svg width="17" height="17" viewBox="0 0 17 17" className="ml-auto">
        <rect x="0.5" y="0.5" width="16" height="12" fill="#e33" stroke="#444" />
        <rect x="1" y="5" width="15" height="4" fill="#2b9de0" />
        <rect x="4" y="14" width="9" height="2" fill="#444" />
        <circle cx="8.5" cy="6.5" r="2" fill="#fff" />
      </svg>
      <svg width="17" height="17" viewBox="0 0 18 18" fill="none" stroke="#222" strokeWidth="1.5" className="ml-[15px]">
        <path d="M8 2 15 9 9 15 2 9Z" />
        <path d="M5 9h7L9 12Z" fill="#e01f1f" stroke="none" />
        <path d="M17 11l-2 5h2Z" fill="#e01f1f" stroke="none" />
      </svg>
      <XBox c="ml-[2px] w-[19px] h-[20px]" />
      <span className="ml-[6px] w-[18px]">Нет</span>
      <div className="ml-[60px] w-px h-[24px] bg-[#dcdcdc]" />
      <svg width="11" height="18" viewBox="0 0 11 18" fill="none" stroke="#333" className="ml-[77px]">
        <path d="M5.5 0.5 9.5 7.5 8 12.5H3L1.5 7.5Z" />
        <rect x="2.5" y="13" width="6" height="4" />
      </svg>
      <div className="ml-[3px] w-[19px] h-[20px] bg-[#1a1a1a] border border-[#999]" />
      <span className="ml-[6px] mr-[26px] w-[133px] whitespace-pre">C:0 M:0 Y:0 K:100  0,200 мм</span>
    </div>
  );
}

const TaskBtn = ({ active, plain, children }) => (
  <div
    className={`w-[55px] h-[36px] mr-[3.3px] shrink-0 flex items-center justify-center rounded-[2px] ${
      active
        ? "bg-[linear-gradient(#777,#5a5a5a_45%,#4a4a4a)] border border-[#888]"
        : plain
        ? ""
        : "bg-[linear-gradient(#3d3d3d,#232323_45%,#1a1a1a)] border border-[#555]"
    }`}
  >
    {children}
  </div>
);

const TrayI = ({ children }) => (
  <svg width="18" height="18" viewBox="0 0 18 18" className="shrink-0">
    {children}
  </svg>
);

function Taskbar() {
  return (
    <div className="h-[38px] bg-[linear-gradient(#2f3338,#0e1114_12%,#0d1013)] flex items-center text-[#e6e6e6] tracking-normal">
      <div className="w-[48px] mr-[7px] shrink-0 flex justify-center">
        <svg width="36" height="36" viewBox="0 0 36 36">
          <circle cx="18" cy="18" r="17" fill="#1d5f8e" stroke="#7fa6bf" />
          <circle cx="18" cy="12" r="13" fill="#6aa7c8" opacity="0.4" />
          <path d="M9 12q4-2 8 0v5q-4-2-8 0Z" fill="#e8502a" />
          <path d="M19 12q4 2 8 0v5q-4 2-8 0Z" fill="#7cbb35" />
          <path d="M9 19q4-2 8 0v6q-4-2-8 0Z" fill="#2f9ae0" />
          <path d="M19 19q4 2 8 0v6q-4 2-8 0Z" fill="#f7c31d" />
        </svg>
      </div>
      <TaskBtn plain>
        <svg width="34" height="34" viewBox="0 0 34 34" fill="none">
          <ellipse cx="17" cy="16" rx="17" ry="7" transform="rotate(-35 17 16)" stroke="#e9b322" strokeWidth="2" />
          <circle cx="16" cy="18" r="10" stroke="#29a5e5" strokeWidth="5" />
          <path d="M7 18h18" stroke="#29a5e5" strokeWidth="3.5" />
          <path d="M24 24l3-3" stroke="#0d1013" strokeWidth="5" />
        </svg>
      </TaskBtn>
      <TaskBtn>
        <svg width="32" height="30" viewBox="0 0 32 30">
          <path d="M1 5h10l3 3h17v20H1Z" fill="#e8cd7a" />
          <rect x="3" y="3" width="14" height="5" fill="#f5ecc4" />
          <path d="M1 12h30v16H1Z" fill="#f3dc8f" />
          <path d="M8 27v-6q0-3 3-3h10q3 0 3 3v6h-4v-5h-8v5Z" fill="#6fb4d8" />
        </svg>
      </TaskBtn>
      <TaskBtn plain>
        <svg width="26" height="28" viewBox="0 0 26 28">
          <rect x="1" y="1" width="24" height="26" rx="2" fill="#3f78b0" />
          <rect x="5" y="4" width="18" height="20" fill="#f4f4f4" />
          <path d="M9 7v14l11-7Z" fill="#ee8a1c" />
        </svg>
      </TaskBtn>
      <TaskBtn>
        <svg width="30" height="30" viewBox="0 0 30 30">
          <circle cx="15" cy="15" r="14" fill="#e0483c" />
          <path d="M15 15 3 22A14 14 0 0 0 19 28.5Z" fill="#34a853" />
          <path d="M15 15 29 13A14 14 0 0 1 19 28.5Z" fill="#fbc116" />
          <circle cx="15" cy="15" r="6.5" fill="#fff" />
          <circle cx="15" cy="15" r="5" fill="#4a86e8" />
        </svg>
      </TaskBtn>
      <TaskBtn plain>
        <svg width="28" height="32" viewBox="0 0 28 32" fill="none">
          <ellipse cx="14" cy="16" rx="11" ry="13" stroke="#d8141c" strokeWidth="6" />
          <ellipse cx="14" cy="16" rx="5" ry="12" stroke="#8f0c12" strokeWidth="1" />
        </svg>
      </TaskBtn>
      <TaskBtn plain>
        <svg width="24" height="32" viewBox="0 0 24 32">
          <rect x="1" y="1" width="22" height="30" rx="2" fill="#8fc1e6" stroke="#4a8ac0" />
          <rect x="4" y="4" width="16" height="7" fill="#d6ecf9" />
          {[13, 18, 23].map((y) =>
            [4, 10, 16].map((x) => <rect key={`${x}${y}`} x={x} y={y} width="4" height="3" fill="#3f79ad" />)
          )}
        </svg>
      </TaskBtn>
      <TaskBtn plain>
        <div className="w-[24px] h-[24px] bg-white flex items-center justify-center">
          <div className="bg-[#111] w-[21px] h-[20px] flex items-center justify-center text-white font-bold text-[14px] leading-none font-['DejaVu_Sans',sans-serif]">7z</div>
        </div>
      </TaskBtn>
      <TaskBtn>
        <svg width="30" height="32" viewBox="0 0 30 32">
          <rect x="2" y="1" width="10" height="26" fill="#1857c9" />
          <rect x="13" y="1" width="10" height="26" fill="#1857c9" />
          <path d="M3 5h8M3 9h8M3 13h8M14 5h8M14 9h8M14 13h8" stroke="#5ac8f0" />
          <rect x="0" y="27" width="22" height="2" fill="#12306e" />
          <path d="M21 15l8 2v7q-2 5-8 7-6-2-8-7v-7Z" fill="#e8c22a" />
          <path d="M21 15v16q-6-2-8-7h8Z" fill="#2d72d2" />
        </svg>
      </TaskBtn>
      <TaskBtn active>
        <svg width="30" height="32" viewBox="0 0 30 32">
          <path d="M5 6 20 28l-6 2L3 12Z" fill="#86bd2c" />
          <path d="M6 9l10 16" stroke="#fff" strokeWidth="2" />
          <path d="M20 2q5 6 3 17l-2 1q-3-9-1-18Z" fill="#b0b0b0" />
        </svg>
      </TaskBtn>
      <div className="ml-auto flex items-center">
        <span className="text-[12px] mb-[5px] text-[#cfcfcf]">RU</span>
        <div className="ml-[11px] flex items-center gap-[4.5px] w-[222px]">
          <div className="w-[18px] h-[14px] shrink-0 flex text-[9px] font-bold leading-[14px] text-center">
            <span className="w-1/2 bg-[#f2a516] text-[#333]">S</span>
            <span className="w-1/2 bg-[#bdbdbd] text-[#333]">C</span>
          </div>
          <TrayI>
            <path d="M2 9l7-7 7 5-2 8H5Z" fill="#6fb8e6" stroke="#e6e6e6" />
          </TrayI>
          <TrayI>
            <circle cx="9" cy="9" r="7" fill="#9a9a9a" />
            <path d="M12 6.5a4 4 0 1 0 0 5" stroke="#eee" strokeWidth="1.5" fill="none" />
          </TrayI>
          <TrayI>
            <rect x="2" y="2" width="14" height="14" fill="#b20f1d" />
            <path d="M6 13l3-9 3 9M7 10h4" stroke="#fff" strokeWidth="1.5" fill="none" />
          </TrayI>
          <TrayI>
            <rect x="4" y="2" width="12" height="14" fill="#3c8fd6" />
            <ellipse cx="9" cy="10" rx="9" ry="4" fill="none" stroke="#ee9b1a" strokeWidth="1.5" />
          </TrayI>
          <TrayI>
            <rect x="3" y="3" width="8" height="14" fill="none" stroke="#ddd" strokeWidth="1.5" />
            <path d="M9 5h6v6H9ZM11 2v3M14 2v3M12 11v5" stroke="#eee" fill="#eee" strokeWidth="1.2" />
          </TrayI>
          <TrayI>
            <rect x="2" y="2" width="14" height="14" fill="#eee" />
            <path d="M4 14q5-3 6-10 1 6 5 6-6 0-11 4Z" fill="none" stroke="#d6141d" />
          </TrayI>
          <TrayI>
            <path d="M4 1v16" stroke="#eee" strokeWidth="1.5" />
            <path d="M4 2h9l-2 3 2 3H4Z" fill="#eee" />
            <circle cx="12" cy="13" r="4.5" fill="#d8201f" />
            <path d="M10 11l4 4m0-4-4 4" stroke="#fff" />
          </TrayI>
          <TrayI>
            <path d="M2 13.5h2v2H2ZM5.5 11.5h2v4h-2ZM9 9.5h2v6H9ZM12.5 6h2v9.5h-2ZM16 3h2v12.5h-2Z" fill="#e6e6e6" />
          </TrayI>
          <TrayI>
            <path d="M2 7h3l4-4v12l-4-4H2Z" fill="#ddd" />
            <path d="M11 6q2 3 0 6M13.5 4.5q3 4.5 0 9" stroke="#ccc" fill="none" />
          </TrayI>
        </div>
        <div className="w-[70px] ml-[6px] mt-[3px] flex flex-col items-center text-[12px] leading-[19px] text-[#e0e0e0]">
          <span>16:35</span>
          <span>07.01.2019</span>
        </div>
        <div className="ml-[1px] mr-[1px] w-[12px] h-[36px] bg-[linear-gradient(#3a3a3a,#151515)] border border-[#555]" />
      </div>
    </div>
  );
}

const objectMenu = [
  [
    { t: "Вставит&ь штрих-код...", i: "bar" },
    { t: "Вставить &QR-код", i: "qr" },
    { t: "Проверить &штрих-код", i: "check" },
  ],
  [
    { t: "Вс&тавить новый объект...", i: "new" },
    { t: "Св&язи...", i: "ole", off: true },
  ],
  [{ t: "&Символ", sub: true }],
  [{ t: "Po&werClip", sub: true }],
  [
    { t: "&Преобразования", sub: true },
    { t: "В&ыровнять и распределить", sub: true },
    { t: "&Порядок", sub: true },
  ],
  [
    { t: "Объединить", k: "Ctrl+L", i: "comb", off: true },
    { t: "&Разъединить Кривая", k: "Ctrl+K", i: "split", active: true },
  ],
  [{ t: "&Группа", sub: true }],
  [{ t: "&Скрыть", sub: true, hover: true }],
  [{ t: "&Блокировать", sub: true }],
  [{ t: "&Формирование", sub: true }],
  [
    { t: "Пр&еобразовать в кривую", k: "Ctrl+Q", i: "curve", off: true },
    { t: "Пр&еобразовать абрис в объект", k: "Ctrl+Shift+Q", i: "outl" },
    { t: "Со&единить кривые" },
  ],
  [
    { t: "На&ложение заливки", off: true },
    { t: "Нало&жение абриса" },
    { t: "&Наложение растрового изображения", off: true },
    { t: "&Подсказки к объектам" },
  ],
  [
    { t: "&Свойства объекта", k: "Alt+Enter" },
    { t: "Д&испетчер объектов" },
  ],
];

const menuIcons = {
  bar: (
    <svg width="16" height="16" viewBox="0 0 16 16" stroke="#222">
      <path d="M1 0v16M3.5 0v16M5.5 0v16M8 0v16M10 0v16M12.5 0v16M15 0v16" strokeWidth="1.2" />
    </svg>
  ),
  qr: (
    <svg width="16" height="16" viewBox="0 0 16 16" fill="none" stroke="#333">
      <rect x="0.5" y="0.5" width="4" height="4" />
      <rect x="11" y="0.5" width="4" height="4" />
      <rect x="0.5" y="11" width="4" height="4" />
      <path d="M7 1v3M9 5l-3 2M8 8l4 1M12 7l3 3M8 11l2 4M12 12l3 3M11 15l4-3" strokeDasharray="1.5 1" />
    </svg>
  ),
  check: (
    <svg width="16" height="16" viewBox="0 0 16 16" fill="none" stroke="#222">
      <circle cx="7" cy="7" r="6" strokeWidth="1.2" />
      <path d="M4 4v5M6 4v5M8 4v5M10 4v5" strokeWidth="1.2" />
      <path d="M11 11l4 4" strokeWidth="2" />
    </svg>
  ),
  new: (
    <svg width="16" height="16" viewBox="0 0 16 16" fill="none" stroke="#333">
      <circle cx="3.5" cy="9" r="2" />
      <rect x="0.5" y="11" width="5" height="4" />
      <rect x="6.5" y="11" width="5" height="4" />
      <rect x="10" y="0" width="6" height="6" fill="#2fae4a" stroke="none" />
      <path d="M13 1.5v3M11.5 3h3" stroke="#fff" />
    </svg>
  ),
  ole: (
    <div className="flex flex-col items-center leading-[8px] text-[9px] text-[#cfcfcf]">
      OLE
      <div className="mt-[1px] w-[13px] h-[6px] border border-[#cfcfcf]" />
    </div>
  ),
  comb: (
    <svg width="15" height="15" viewBox="0 0 15 15" fill="#c4c4c4">
      <rect x="0" y="0" width="8" height="8" />
      <rect x="4" y="4" width="9" height="9" fill="#a9a9a9" />
      <rect x="6" y="6" width="3" height="3" fill="#e6e6e6" />
    </svg>
  ),
  split: (
    <svg width="17" height="17" viewBox="0 0 17 17" fill="none" stroke="#222" className="-ml-px">
      <rect x="1" y="1" width="9.5" height="9.5" />
      <rect x="7" y="7" width="9" height="9" />
      <path d="M12.5 4.5l3-3M1 15.5l3-3" />
    </svg>
  ),
  curve: (
    <svg width="16" height="16" viewBox="0 0 16 16" fill="none" stroke="#c9c9c9">
      <circle cx="7" cy="9" r="5.5" strokeWidth="1.5" strokeDasharray="3 1" />
      <path d="M11 1h4M12 3.5h3M12 6h3" />
    </svg>
  ),
  outl: (
    <svg width="16" height="16" viewBox="0 0 16 16" fill="none">
      <rect x="1.5" y="2.5" width="10" height="12" fill="#f0c2a4" stroke="#9c3f12" strokeWidth="3" />
      <rect x="5" y="7" width="3" height="4" fill="#f8f8f8" />
      <path d="M12 1h3M12 3.5h3M12 6h3" stroke="#222" />
    </svg>
  ),
};

const MenuRow = ({ r }) => (
  <div
    className={`relative h-[20.6px] flex items-center ${r.off ? "text-[#c6c6c6]" : "text-[#333]"} ${
      r.active ? "bg-[#dff0fe] border border-[#4ab5ea] mx-[1px] rounded-[1px]" : ""
    } ${r.hover ? "bg-[#fde8da] mx-[2px]" : ""}`}
  >
    <div className={`flex items-center justify-center shrink-0 ${r.active || r.hover ? "w-[23px]" : "w-[25px]"}`}>{r.i && menuIcons[r.i]}</div>
    <span className="ml-[5px]">
      <Mn t={r.t} />
    </span>
    {r.k && <span className={`absolute top-1/2 -translate-y-1/2 ${r.active ? "right-[20px]" : "right-[22px]"}`}>{r.k}</span>}
    {r.sub && <Caret dir="right" c={`absolute top-1/2 -translate-y-1/2 ${r.hover ? "right-[3px]" : "right-[5px]"}`} />}
  </div>
);

function ObjectMenu() {
  return (
    <div className="absolute left-[187px] top-[41px] w-[300px] h-[600px] bg-white border border-[#b5b5b5] pt-[1.2px]">
      <div className="absolute left-0 top-0 bottom-0 w-[25px] bg-[#f0f0f0]" />
      <div className="relative">
        {objectMenu.map((group, gi) => (
          <React.Fragment key={gi}>
            {gi > 0 && (
              <div className="h-[6.7px] flex items-center pl-[26px] pr-[2px]">
                <div className="w-full h-[1.5px] bg-[#e2e2e2]" />
              </div>
            )}
            {group.map((r) => (
              <MenuRow key={r.t} r={r} />
            ))}
          </React.Fragment>
        ))}
      </div>
    </div>
  );
}

export default function App() {
  return (
    <div className="relative w-[1500px] h-[844px] overflow-hidden bg-[#f3f3f3] text-[11px] tracking-[-0.1px] leading-[16px] font-['Roboto','Open_Sans',sans-serif]">
      <TitleBar />
      <MenuBar />
      <Toolbar1 />
      <Toolbar2 />
      <PropBar />
      <div className="h-[632px] flex">
        <Toolbox />
        <Center />
        <Docker />
        <SideTabs />
        <Palette />
      </div>
      <StatusBar />
      <Taskbar />
      <ObjectMenu />
    </div>
  );
}
